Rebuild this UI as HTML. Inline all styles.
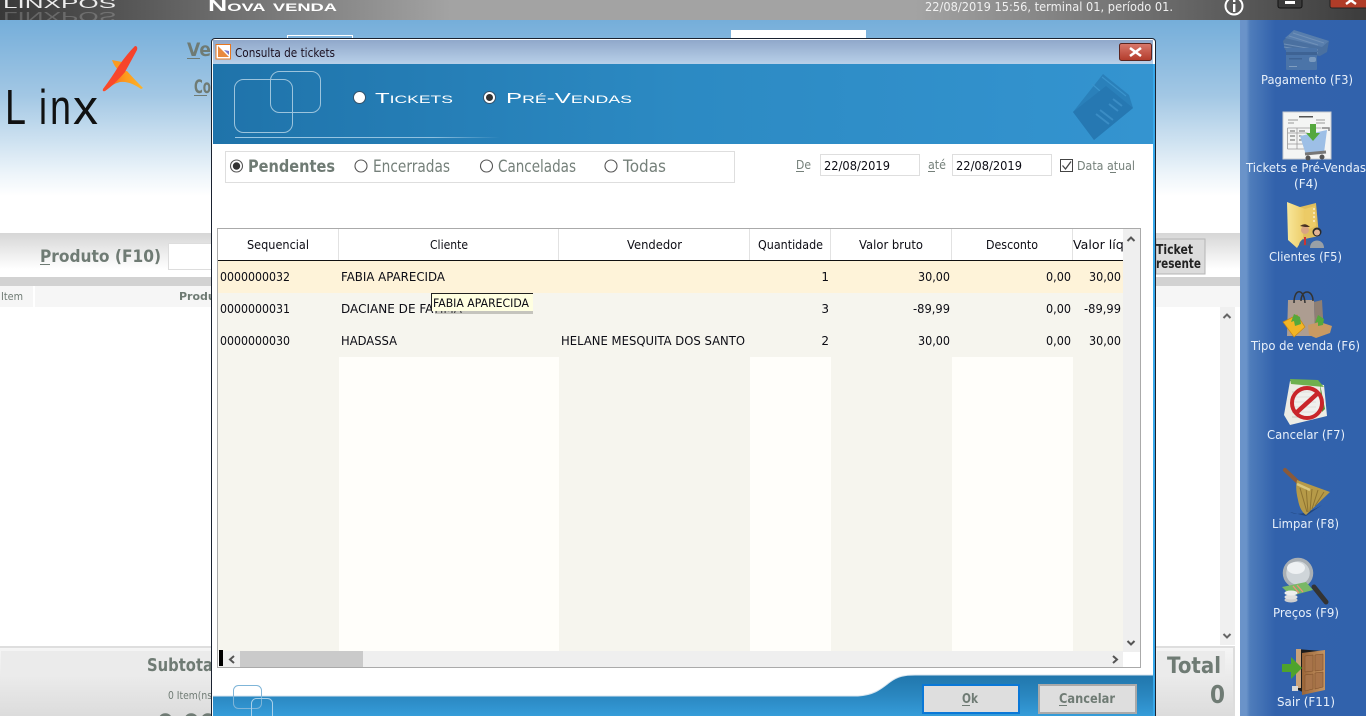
<!DOCTYPE html>
<html lang="pt"><head><meta charset="utf-8"><title>Consulta de tickets</title>
<style>
html,body{margin:0;padding:0;background:#fff;width:1366px;height:716px;overflow:hidden}
svg{display:block}
text{font-family:"DejaVu Sans","Liberation Sans",sans-serif;font-size:12px;fill:#0c0c14;white-space:pre}
.b{font-weight:bold;fill:#6f7b74}
.g{fill:#75807a;font-size:16.500px}
.s{fill:#e8f0fa;font-size:12px}
.c{font-family:"Liberation Sans",sans-serif;font-variant:small-caps;fill:#fff;font-size:17px}
.l{font-family:"Liberation Sans",sans-serif;font-size:49px;fill:#111}
</style></head><body>
<svg width="1366" height="716" viewBox="0 0 1366 716" xmlns="http://www.w3.org/2000/svg">
<defs>
<linearGradient id="top" x1="0" x2="1" y1="0" y2="0"><stop offset="0" stop-color="#383838"/><stop offset=".33" stop-color="#a3a3a3"/><stop offset=".67" stop-color="#a3a3a3"/><stop offset="1" stop-color="#3c3c3c"/></linearGradient>
<linearGradient id="sky" x1="0" x2="0" y1="0" y2="1"><stop offset="0" stop-color="#75aeda"/><stop offset=".35" stop-color="#a2c7e4"/><stop offset=".72" stop-color="#eef5fa"/><stop offset=".82" stop-color="#fff"/><stop offset="1" stop-color="#fff"/></linearGradient>
<linearGradient id="band" x1="0" x2="0" y1="0" y2="1"><stop offset="0" stop-color="#d6d6d6"/><stop offset="1" stop-color="#fff"/></linearGradient>
<linearGradient id="sub" x1="0" x2="0" y1="0" y2="1"><stop offset="0" stop-color="#f5f5f5"/><stop offset="1" stop-color="#dcdcdc"/></linearGradient>
<linearGradient id="side" x1="0" x2="1" y1="0" y2="0"><stop offset="0" stop-color="#6a93c9"/><stop offset=".05" stop-color="#6a93c9"/><stop offset=".08" stop-color="#4f7dbb"/><stop offset=".28" stop-color="#3262ac"/><stop offset="1" stop-color="#3162ac"/></linearGradient>
<linearGradient id="ttl" x1="0" x2="0" y1="0" y2="1"><stop offset="0" stop-color="#90a8ca"/><stop offset="1" stop-color="#b8d0e9"/></linearGradient>
<linearGradient id="hdr" x1="0" x2="1" y1="0" y2="0"><stop offset="0" stop-color="#1f73aa"/><stop offset=".5" stop-color="#2c8ac3"/><stop offset="1" stop-color="#3494d0"/></linearGradient>
<linearGradient id="line" x1="0" x2="1" y1="0" y2="0"><stop offset="0" stop-color="#9cc8e4"/><stop offset=".75" stop-color="#8fc0df"/><stop offset="1" stop-color="#8fc0df" stop-opacity="0"/></linearGradient>
<linearGradient id="foot" x1="0" x2="0" y1="0" y2="1"><stop offset="0" stop-color="#2076ac"/><stop offset=".5" stop-color="#2a87c0"/><stop offset="1" stop-color="#359cd9"/></linearGradient>
<linearGradient id="flame" x1="0" x2="0" y1="0" y2="1"><stop offset="0" stop-color="#f4402c"/><stop offset="1" stop-color="#fb4a2a"/></linearGradient>
<linearGradient id="flame2" x1="0" x2="1" y1="0" y2="0"><stop offset="0" stop-color="#fb5a24"/><stop offset=".55" stop-color="#fd9a1c"/><stop offset="1" stop-color="#fdb52a"/></linearGradient>
<linearGradient id="red" x1="0" x2="0" y1="0" y2="1"><stop offset="0" stop-color="#d9796c"/><stop offset="1" stop-color="#b23b2b"/></linearGradient>
<linearGradient id="folder" x1="0" x2="1" y1="0" y2="0"><stop offset="0" stop-color="#f8e79a"/><stop offset="1" stop-color="#eccb66"/></linearGradient>
<linearGradient id="door" x1="0" x2="1" y1="0" y2="0"><stop offset="0" stop-color="#9a6538"/><stop offset="1" stop-color="#c59563"/></linearGradient>
<clipPath id="topc"><rect x="0" y="0" width="1366" height="20"/></clipPath>
<clipPath id="colv"><rect x="1073" y="229" width="50" height="32"/></clipPath>
<clipPath id="row2"><rect x="341" y="296" width="122" height="20"/></clipPath>
<clipPath id="prod"><rect x="170" y="286" width="41" height="22"/></clipPath>
</defs>

<!-- background app -->
<rect x="0" y="20" width="1240" height="215" fill="url(#sky)"/>
<rect x="0" y="233" width="1240" height="483" fill="#fff"/>
<rect x="0" y="233" width="1240" height="36" fill="url(#band)"/>
<rect x="0" y="0" width="1366" height="20" fill="url(#top)"/>

<g clip-path="url(#topc)">
<text x="3" y="8" textLength="113" lengthAdjust="spacingAndGlyphs" style="font-family:'Liberation Sans',sans-serif;font-size:14px;fill:#ececec">LINXPOS</text>
<text transform="translate(0,20) scale(1,-1)" x="3" y="8" textLength="113" lengthAdjust="spacingAndGlyphs" style="font-family:'Liberation Sans',sans-serif;font-size:14px;fill:#e8e8e8;opacity:.22">LINXPOS</text>
</g>
<text class="c" x="208" y="11" textLength="129" lengthAdjust="spacingAndGlyphs" style="font-weight:bold;font-size:16px">Nova venda</text>
<text x="925" y="11" textLength="248" lengthAdjust="spacingAndGlyphs" style="fill:#f0f0f0;font-size:12.500px">22/08/2019 15:56, terminal 01, período 01.</text>
<circle cx="1234" cy="6" r="8.500" fill="none" stroke="#fff" stroke-width="2"/>
<rect x="1233" y="4" width="2.400" height="8" fill="#fff"/><rect x="1233" y="0" width="2.400" height="2" fill="#fff"/>
<rect x="1278" y="-3" width="24" height="11" rx="2" fill="#3a3a3a" stroke="#111"/><rect x="1285" y="1" width="10" height="3" fill="#fff"/>
<rect x="1330" y="-3" width="38" height="11" rx="2" fill="#b03c28" stroke="#222"/><path d="M1346 -3L1356 4M1356 -3L1346 4" stroke="#fff" stroke-width="2.400" fill="none"/>

<!-- logo -->
<text class="l" x="5" y="124" textLength="21" lengthAdjust="spacingAndGlyphs">L</text>
<text class="l" x="39" y="124" textLength="8" lengthAdjust="spacingAndGlyphs">i</text>
<text class="l" x="50" y="124" textLength="21" lengthAdjust="spacingAndGlyphs">n</text>
<text class="l" x="73" y="124" textLength="25" lengthAdjust="spacingAndGlyphs">x</text>
<path d="M112 60L122 62L119 71Q114 66 112 60Z" fill="#fb9a20"/>
<path d="M104 91Q114 72 127 71Q134 79 143 88L141 89Q130 81 120 82Q112 84 105 91Z" fill="url(#flame2)"/>
<path d="M135 46Q138 46 137 50L125 72Q114 85 105 91Q102 92 103 89Q112 77 118 67Q126 55 135 46Z" fill="url(#flame)"/>

<text x="187" y="56" textLength="24" lengthAdjust="spacingAndGlyphs" class="b" style="font-size:19px">Ve</text><rect x="187" y="58" width="13" height="1" fill="#6f7b74"/>
<text x="194" y="93" textLength="17" lengthAdjust="spacingAndGlyphs" class="b" style="font-size:19px">Co</text><rect x="194" y="95" width="13" height="1" fill="#6f7b74"/>
<rect x="287.500" y="35.500" width="65" height="5" fill="none" stroke="#fff"/>
<rect x="731" y="30" width="135" height="9" fill="#fff"/>

<text x="40" y="262" textLength="121" lengthAdjust="spacingAndGlyphs" class="b" style="font-size:17px">Produto (F10)</text><rect x="40" y="264" width="10" height="1" fill="#6f7b74"/>
<rect x="168.500" y="243.500" width="60" height="26" fill="#fff" stroke="#ddd"/>
<rect x="0" y="277" width="1240" height="9" fill="#d2d2d2"/>
<rect x="0" y="286" width="1240" height="21" fill="#f6f6f6"/>
<rect x="33" y="286" width="2" height="21" fill="#fff"/>
<text x="1" y="300" textLength="22" lengthAdjust="spacingAndGlyphs" style="fill:#6f7b74;font-size:11px">Item</text>
<text x="179" y="300" clip-path="url(#prod)" style="fill:#6f7b74;font-size:11px;font-weight:bold">Produto</text>
<rect x="1156" y="239" width="49" height="35" fill="#dcdcdc" stroke="#b5b5b5"/>
<text x="1156" y="254" textLength="37" lengthAdjust="spacingAndGlyphs" style="font-weight:bold;font-size:13px;fill:#222">Ticket</text>
<text x="1156" y="268" textLength="45" lengthAdjust="spacingAndGlyphs" style="font-weight:bold;font-size:13px;fill:#222">resente</text>
<rect x="1220" y="307" width="15" height="338" fill="#f0f0f0"/>
<path d="M1223.500 318L1227 314.500L1230.500 318M1223.500 634L1227 637.500L1230.500 634" stroke="#666" stroke-width="2" fill="none"/>
<rect x="0" y="646" width="1235" height="2" fill="#dedede"/>
<rect x="0" y="648" width="1233" height="68" fill="url(#sub)"/>
<rect x="1" y="651" width="210" height="26" fill="#ebebeb"/>
<rect x="1157" y="651" width="68" height="26" fill="#ebebeb"/>
<rect x="1233" y="648" width="2" height="68" fill="#ddd"/>
<text x="147" y="671" textLength="66" lengthAdjust="spacingAndGlyphs" class="b" style="font-size:18px">Subtota</text>
<text x="1167" y="673" textLength="54" lengthAdjust="spacingAndGlyphs" class="b" style="font-size:22px">Total</text>
<text x="1210" y="703" textLength="15" lengthAdjust="spacingAndGlyphs" class="b" style="font-size:25px">0</text>
<text x="168" y="699" textLength="44" lengthAdjust="spacingAndGlyphs" style="fill:#6f7b74;font-size:11px">0 Item(ns</text>
<text x="157" y="731" class="b" style="font-size:24px">0,00</text>

<!-- side bar -->
<rect x="1240" y="20" width="126" height="696" fill="url(#side)"/>
<!-- payment icon -->
<g>
<path d="M1294 30L1329 41L1327 52L1320 56L1285 50L1283 41Z" fill="#4a70a0"/>
<path d="M1294 30L1329 41L1322 47L1285 38Z" fill="#587ead"/>
<path d="M1293 33L1324 43M1289 36L1318 45M1284 44L1318 50M1284 47L1318 53" stroke="#6f90b8" stroke-width="1" fill="none"/>
<rect x="1286" y="48" width="31" height="22" rx="1" fill="#4b74a8"/>
<rect x="1286" y="52" width="31" height="3" fill="#3e6394"/>
<rect x="1309" y="57" width="7" height="5" rx="2" fill="#7a9abf"/>
<rect x="1289" y="58" width="13" height="1.500" fill="#3e6394"/><rect x="1289" y="66" width="8" height="1" fill="#7f9dc0"/>
</g>
<text class="s" x="1261" y="84" textLength="92" lengthAdjust="spacingAndGlyphs">Pagamento (F3)</text>
<!-- tickets icon -->
<g>
<rect x="1283" y="112" width="48" height="47" fill="#f4f5f4" stroke="#c8ccd0"/>
<rect x="1299" y="116" width="14" height="1.500" fill="#555"/>
<path d="M1288 120h10M1288 123h6M1316 120h9M1316 123h9" stroke="#999" stroke-width="1"/>
<path d="M1287.500 128h34M1287.500 133h20M1287.500 144h20M1287.500 149h20M1297 128v21M1287.500 128v21" stroke="#999" fill="none" stroke-width=".8"/>
<path d="M1290 131h5M1290 136h5M1290 140h5M1299 131h6M1299 136h6M1299 140h6" stroke="#666" stroke-width="1"/>
<path d="M1300 136L1327 130L1324 153L1306 155Z" fill="#9dbfe6"/>
<path d="M1310 124h6v9h4l-7 8l-7-8h4Z" fill="#55a83e"/>
<path d="M1322 128h7v3" stroke="#888" stroke-width="1.500" fill="none"/>
<path d="M1305 154L1326 152" stroke="#777" stroke-width="3"/>
<circle cx="1308" cy="158" r="2.500" fill="#555"/><circle cx="1322" cy="157" r="2.500" fill="#555"/>
</g>
<text class="s" x="1246" y="172" textLength="120" lengthAdjust="spacingAndGlyphs">Tickets e Pré-Vendas</text>
<text class="s" x="1294" y="188" textLength="24" lengthAdjust="spacingAndGlyphs">(F4)</text>
<!-- clients icon -->
<g>
<path d="M1300 207L1316 203L1319 236L1300 240Z" fill="#dfbd5c"/>
<path d="M1287 202L1305 209L1303 238L1297 248L1288 240Z" fill="url(#folder)"/>
<path d="M1305 209L1315 206L1316 226L1303 232Z" fill="#eccb66"/>
<path d="M1314 208v14" stroke="#fff" stroke-width="1" stroke-dasharray="2 2"/>
<circle cx="1305" cy="230" r="4" fill="#d9a582"/><path d="M1300 226Q1305 222 1310 227L1305 227Z" fill="#4a3224"/><path d="M1299 246C1299 237 1311 237 1311 246Z" fill="#3f6496"/><rect x="1304" y="237" width="2" height="8" fill="#c33"/>
<circle cx="1317" cy="232" r="4.500" fill="#2a2a2a"/><circle cx="1317" cy="232.500" r="3" fill="#e0b394"/><path d="M1310 248C1310 238 1324 238 1324 248Z" fill="#9aa0a6"/>
</g>
<text class="s" x="1269" y="261" textLength="73" lengthAdjust="spacingAndGlyphs">Clientes (F5)</text>
<!-- sale type icon -->
<g>
<path d="M1288 300h26l1 36h-28Z" fill="#ad9d91"/>
<path d="M1314 302l8-2l2 34l-9 2Z" fill="#8f7f73"/>
<path d="M1294 303C1294 288 1304 288 1305 303M1301 301C1301 289 1313 289 1313 301" stroke="#333" stroke-width="1.500" fill="none"/>
<path d="M1283 322L1297 315L1305 327L1294 337Z" fill="#f2b526" stroke="#c98814" stroke-width=".7"/>
<path d="M1308 325L1320 322L1332 326L1330 333L1316 338L1309 335Z" fill="#c99a62"/>
<path d="M1294 314l6 3l1 7l-6 2l-1-5l-3 1Z" fill="#56a83c"/>
<path d="M1318 315l6 4l-1 6l-5 1v-4l-3 1Z" fill="#56a83c"/>
</g>
<text class="s" x="1251" y="350" textLength="109" lengthAdjust="spacingAndGlyphs">Tipo de venda (F6)</text>
<!-- cancel icon -->
<g>
<path d="M1290 381L1324 385L1327 416L1290 425L1284 415Z" fill="#ecece4"/>
<path d="M1290 379L1318 380L1324 387L1291 384Z" fill="#6fb04e"/>
<path d="M1320 384L1325 409L1322 412Z" fill="#4f9034"/>
<path d="M1292 392h24M1292 397h24M1292 402h24M1292 407h24M1292 412h24M1292 417h24" stroke="#c9c9c0" stroke-width="1"/>
<circle cx="1307" cy="403" r="15" fill="#f4f4f4" fill-opacity=".55" stroke="#c9252a" stroke-width="4"/>
<path d="M1296 413L1318 393" stroke="#c9252a" stroke-width="4.500"/>
</g>
<text class="s" x="1267" y="439" textLength="78" lengthAdjust="spacingAndGlyphs">Cancelar (F7)</text>
<!-- broom icon -->
<g>
<path d="M1290 512Q1300 518 1322 505L1306 516Z" fill="#22467f"/>
<path d="M1285 470L1300 484" stroke="#8a5a3a" stroke-width="4" stroke-linecap="round"/>
<path d="M1297 480L1330 492L1306 515Q1300 511 1298 500Q1295 488 1297 480Z" fill="#b69a48"/>
<path d="M1300 488L1307 512M1306 487L1308 512M1312 489L1310 511M1318 490L1312 509M1324 492L1315 506" stroke="#8e7330" stroke-width="1"/>
<path d="M1297 484L1310 490" stroke="#d9c87e" stroke-width="2.500"/>
</g>
<text class="s" x="1272" y="528" textLength="67" lengthAdjust="spacingAndGlyphs">Limpar (F8)</text>
<!-- prices icon -->
<g>
<circle cx="1298" cy="573" r="13.500" fill="#cfd5d9" stroke="#a9afb4" stroke-width="3.500"/>
<ellipse cx="1296" cy="568" rx="9" ry="6" fill="#eef1f3"/>
<path d="M1314 587L1326 602" stroke="#333" stroke-width="5" stroke-linecap="round"/>
<path d="M1282 587L1306 582L1313 590L1291 596Z" fill="#79b866"/>
<path d="M1293 586l6 7M1297 585l6 7" stroke="#f09078" stroke-width="1.300"/>
<ellipse cx="1291" cy="600" rx="6.500" ry="2.500" fill="#cfcfcf"/><ellipse cx="1291" cy="597" rx="6.500" ry="2.500" fill="#e0e0e0"/><ellipse cx="1291" cy="593" rx="6.500" ry="2.500" fill="#eee"/>
</g>
<text class="s" x="1273" y="617" textLength="66" lengthAdjust="spacingAndGlyphs">Preços (F9)</text>
<!-- exit icon -->
<g>
<path d="M1296 649L1322 651L1322 689L1305 693L1296 689Z" fill="#1c1c1c"/>
<path d="M1296 649h5v39h-5Z" fill="#c9a27a"/>
<path d="M1302 653L1325 650L1325 690L1302 695Z" fill="url(#door)"/>
<path d="M1305 656l8-1v16l-8 1ZM1315 655l8-1v16l-8 1ZM1305 675l8-1v15l-8 2ZM1315 673l8-1v15l-8 2Z" fill="#a8744a" stroke="#7a4c28" stroke-width=".5"/>
<path d="M1282 664h9v-7l11 11l-11 11v-7h-9Z" fill="#4ea32c"/>
<path d="M1292 686h6v5h-6Z" fill="#d8d8d8"/>
</g>
<text class="s" x="1277" y="706" textLength="58" lengthAdjust="spacingAndGlyphs">Sair (F11)</text>

<!-- modal -->
<rect x="211" y="38" width="945" height="690" rx="4" fill="#1a2230"/>
<rect x="212" y="39" width="943" height="680" rx="3" fill="#fff"/>
<rect x="1153" y="64" width="2" height="652" fill="#37a8ea"/>
<rect x="213" y="40" width="940" height="24" fill="url(#ttl)"/>
<rect x="216" y="44.500" width="14.500" height="14.500" fill="#fff" stroke="#e87820"/>
<path d="M218 46L229 57H218Z" fill="#e88a40"/><path d="M224 50L229 55L229 51Z" fill="#7a76c8"/>
<text x="235" y="57" textLength="100" lengthAdjust="spacingAndGlyphs" style="font-size:12px;fill:#1a1020">Consulta de tickets</text>
<rect x="1119.500" y="43.500" width="32" height="17" rx="2" fill="url(#red)" stroke="#5a2520"/>
<path d="M1130 48L1141 56M1141 48L1130 56" stroke="#fff" stroke-width="2.600"/>

<rect x="213" y="64" width="940" height="80" fill="url(#hdr)"/>
<rect x="234.500" y="79.500" width="58" height="53" rx="9" fill="none" stroke="#9cc4dd" stroke-width="1"/>
<rect x="270.500" y="71.500" width="50" height="41" rx="9" fill="none" stroke="#9cc4dd" stroke-width="1"/>
<rect x="235" y="137" width="265" height="1" fill="url(#line)"/>
<circle cx="359.500" cy="97.500" r="6" fill="#fff" stroke="#34526a"/>
<text class="c" x="375" y="103" textLength="78" lengthAdjust="spacingAndGlyphs" style="font-size:15px">Tickets</text>
<circle cx="489.500" cy="97.500" r="6" fill="#fff" stroke="#34526a"/><circle cx="489.500" cy="97.500" r="3.500" fill="#333"/>
<text class="c" x="506" y="103" textLength="126" lengthAdjust="spacingAndGlyphs" style="font-size:15px">Pré-Vendas</text>
<!-- documents watermark -->
<path d="M1103 74L1129 95L1133 108L1094 140L1073 112Z" fill="#2a80ba"/>
<path d="M1102 77L1126 96M1092 84L1115 104" stroke="#3a93cc" stroke-width="1.200" fill="none"/>
<path d="M1073 112L1106 86L1133 108L1094 140Z" fill="#2678b2"/>
<path d="M1109 104L1118 111M1113 99L1122 106M1100 110L1113 120M1096 114L1109 124" stroke="#3a8cc4" stroke-width="2" fill="none"/>

<rect x="225.500" y="151.500" width="509" height="31" fill="#fff" stroke="#dedede" stroke-width="1"/>
<g fill="none" stroke="#555" stroke-width="1.100">
<circle cx="236.500" cy="166" r="6"/><circle cx="361" cy="166" r="6"/><circle cx="486.500" cy="166" r="6"/><circle cx="611" cy="166" r="6"/>
</g>
<circle cx="236.500" cy="166" r="3.700" fill="#333"/>
<text x="248" y="172" textLength="87" lengthAdjust="spacingAndGlyphs" class="b" style="font-size:16.500px">Pendentes</text>
<text x="373" y="172" textLength="77" lengthAdjust="spacingAndGlyphs" class="g">Encerradas</text>
<text x="498" y="172" textLength="78" lengthAdjust="spacingAndGlyphs" class="g">Canceladas</text>
<text x="623" y="172" textLength="43" lengthAdjust="spacingAndGlyphs" class="g">Todas</text>
<text x="796" y="169" textLength="15" lengthAdjust="spacingAndGlyphs" style="fill:#75807a;font-size:12px">De</text><rect x="796" y="171" width="8" height="1" fill="#75807a"/>
<rect x="820.500" y="154.500" width="99" height="21" fill="#fff" stroke="#dedede"/>
<text x="824" y="170" textLength="66" lengthAdjust="spacingAndGlyphs">22/08/2019</text>
<text x="928" y="169" textLength="18" lengthAdjust="spacingAndGlyphs" style="fill:#75807a;font-size:12px">até</text><rect x="928" y="171" width="7" height="1" fill="#75807a"/>
<rect x="952.500" y="154.500" width="99" height="21" fill="#fff" stroke="#dedede"/>
<text x="956" y="170" textLength="66" lengthAdjust="spacingAndGlyphs">22/08/2019</text>
<rect x="1060.500" y="159.500" width="12" height="12" fill="#fff" stroke="#444"/>
<path d="M1062.500 165.500L1065.500 169L1071 161.500" stroke="#444" stroke-width="1.300" fill="none"/>
<text x="1077" y="170" textLength="58" lengthAdjust="spacingAndGlyphs" style="fill:#75807a;font-size:12px">Data atual</text><rect x="1110" y="172" width="6" height="1" fill="#75807a"/>

<!-- grid -->
<rect x="217.500" y="228.500" width="923" height="439" fill="#fff" stroke="#aaa"/>
<g fill="#e2e2e2"><rect x="338" y="229" width="1" height="31"/><rect x="558" y="229" width="1" height="31"/><rect x="749" y="229" width="1" height="31"/><rect x="830" y="229" width="1" height="31"/><rect x="951" y="229" width="1" height="31"/><rect x="1072" y="229" width="1" height="31"/></g>
<rect x="218" y="260" width="905" height="1" fill="#111"/>
<rect x="218" y="261" width="905" height="32" fill="#fef3d9"/>
<rect x="218" y="293" width="905" height="64" fill="#f6f5ee"/>
<rect x="218" y="357" width="905" height="294" fill="#fffefa"/>
<g fill="#f6f5ee"><rect x="218" y="357" width="121" height="294"/><rect x="559" y="357" width="191" height="294"/><rect x="831" y="357" width="121" height="294"/><rect x="1073" y="357" width="50" height="294"/></g>

<text x="247" y="249" textLength="62" lengthAdjust="spacingAndGlyphs">Sequencial</text>
<text x="430" y="249" textLength="38" lengthAdjust="spacingAndGlyphs">Cliente</text>
<text x="627" y="249" textLength="55" lengthAdjust="spacingAndGlyphs">Vendedor</text>
<text x="758" y="249" textLength="65" lengthAdjust="spacingAndGlyphs">Quantidade</text>
<text x="859" y="249" textLength="64" lengthAdjust="spacingAndGlyphs">Valor bruto</text>
<text x="986" y="249" textLength="52" lengthAdjust="spacingAndGlyphs">Desconto</text>
<text x="1073" y="249" clip-path="url(#colv)" textLength="78" lengthAdjust="spacingAndGlyphs">Valor líquido</text>

<text x="220" y="281" textLength="70" lengthAdjust="spacingAndGlyphs">0000000032</text>
<text x="341" y="281" textLength="104" lengthAdjust="spacingAndGlyphs">FABIA APARECIDA</text>
<text x="829" y="281" text-anchor="end">1</text>
<text x="950" y="281" text-anchor="end" textLength="32" lengthAdjust="spacingAndGlyphs">30,00</text>
<text x="1071" y="281" text-anchor="end" textLength="25" lengthAdjust="spacingAndGlyphs">0,00</text>
<text x="1121" y="281" text-anchor="end" textLength="32" lengthAdjust="spacingAndGlyphs">30,00</text>

<text x="220" y="313" textLength="70" lengthAdjust="spacingAndGlyphs">0000000031</text>
<text x="341" y="313" clip-path="url(#row2)" textLength="121" lengthAdjust="spacingAndGlyphs">DACIANE DE FATIMA</text>
<text x="829" y="313" text-anchor="end">3</text>
<text x="950" y="313" text-anchor="end" textLength="37" lengthAdjust="spacingAndGlyphs">-89,99</text>
<text x="1071" y="313" text-anchor="end" textLength="25" lengthAdjust="spacingAndGlyphs">0,00</text>
<text x="1121" y="313" text-anchor="end" textLength="37" lengthAdjust="spacingAndGlyphs">-89,99</text>

<text x="220" y="345" textLength="70" lengthAdjust="spacingAndGlyphs">0000000030</text>
<text x="341" y="345" textLength="56" lengthAdjust="spacingAndGlyphs">HADASSA</text>
<text x="561" y="345" textLength="184" lengthAdjust="spacingAndGlyphs">HELANE MESQUITA DOS SANTO</text>
<text x="829" y="345" text-anchor="end">2</text>
<text x="950" y="345" text-anchor="end" textLength="32" lengthAdjust="spacingAndGlyphs">30,00</text>
<text x="1071" y="345" text-anchor="end" textLength="25" lengthAdjust="spacingAndGlyphs">0,00</text>
<text x="1121" y="345" text-anchor="end" textLength="32" lengthAdjust="spacingAndGlyphs">30,00</text>

<!-- tooltip -->
<rect x="435" y="311" width="98" height="3" fill="#8a8a80" opacity=".45"/>
<rect x="431" y="294" width="102" height="17" fill="#ffffe1"/>
<path d="M431.500 311V293.500H533" stroke="#222" fill="none" stroke-width="1"/>
<text x="433" y="307" textLength="96" lengthAdjust="spacingAndGlyphs" style="font-size:11.500px">FABIA APARECIDA</text>

<!-- scrollbars -->
<rect x="1123" y="229" width="17" height="423" fill="#efefef"/>
<path d="M1127.500 241L1131 237.500L1134.500 241M1127.500 641L1131 644.500L1134.500 641" stroke="#555" stroke-width="2" fill="none"/>
<rect x="219" y="651" width="904" height="16" fill="#efefef"/>
<rect x="219" y="650" width="4" height="16" fill="#000"/>
<path d="M234 656L230 659.500L234 663M1113 656L1117 659.500L1113 663" stroke="#555" stroke-width="2" fill="none"/>
<rect x="240" y="651" width="123" height="16" fill="#cacaca"/>
<rect x="1123" y="652" width="17" height="15" fill="#fff"/>

<!-- footer -->
<path d="M213 696H858C875 695 882 688 890 682C898 676 905 675 915 675H1153V716H213Z" fill="url(#foot)"/>
<path d="M213 696H858C875 695 882 688 890 682C898 676 905 675 915 675H1153" fill="none" stroke="#d8e6f0" stroke-width="1"/>
<rect x="233.500" y="685.500" width="28" height="23" rx="5" fill="none" stroke="#7fb5d8"/>
<rect x="251.500" y="698.500" width="21" height="24" rx="5" fill="none" stroke="#a8d0ea"/>
<rect x="923" y="685" width="96" height="28" fill="#dedede" stroke="#0a78d7" stroke-width="2"/>
<rect x="1039" y="685" width="97" height="28" fill="#dedede" stroke="#a9a9a9" stroke-width="2"/>
<text x="962" y="703" textLength="16" lengthAdjust="spacingAndGlyphs" class="b" style="font-size:13px">Ok</text><rect x="962" y="705" width="8" height="1" fill="#6f7b74"/>
<text x="1059" y="703" textLength="56" lengthAdjust="spacingAndGlyphs" class="b" style="font-size:13px">Cancelar</text><rect x="1059" y="705" width="8" height="1" fill="#6f7b74"/>
</svg>
</body></html>
